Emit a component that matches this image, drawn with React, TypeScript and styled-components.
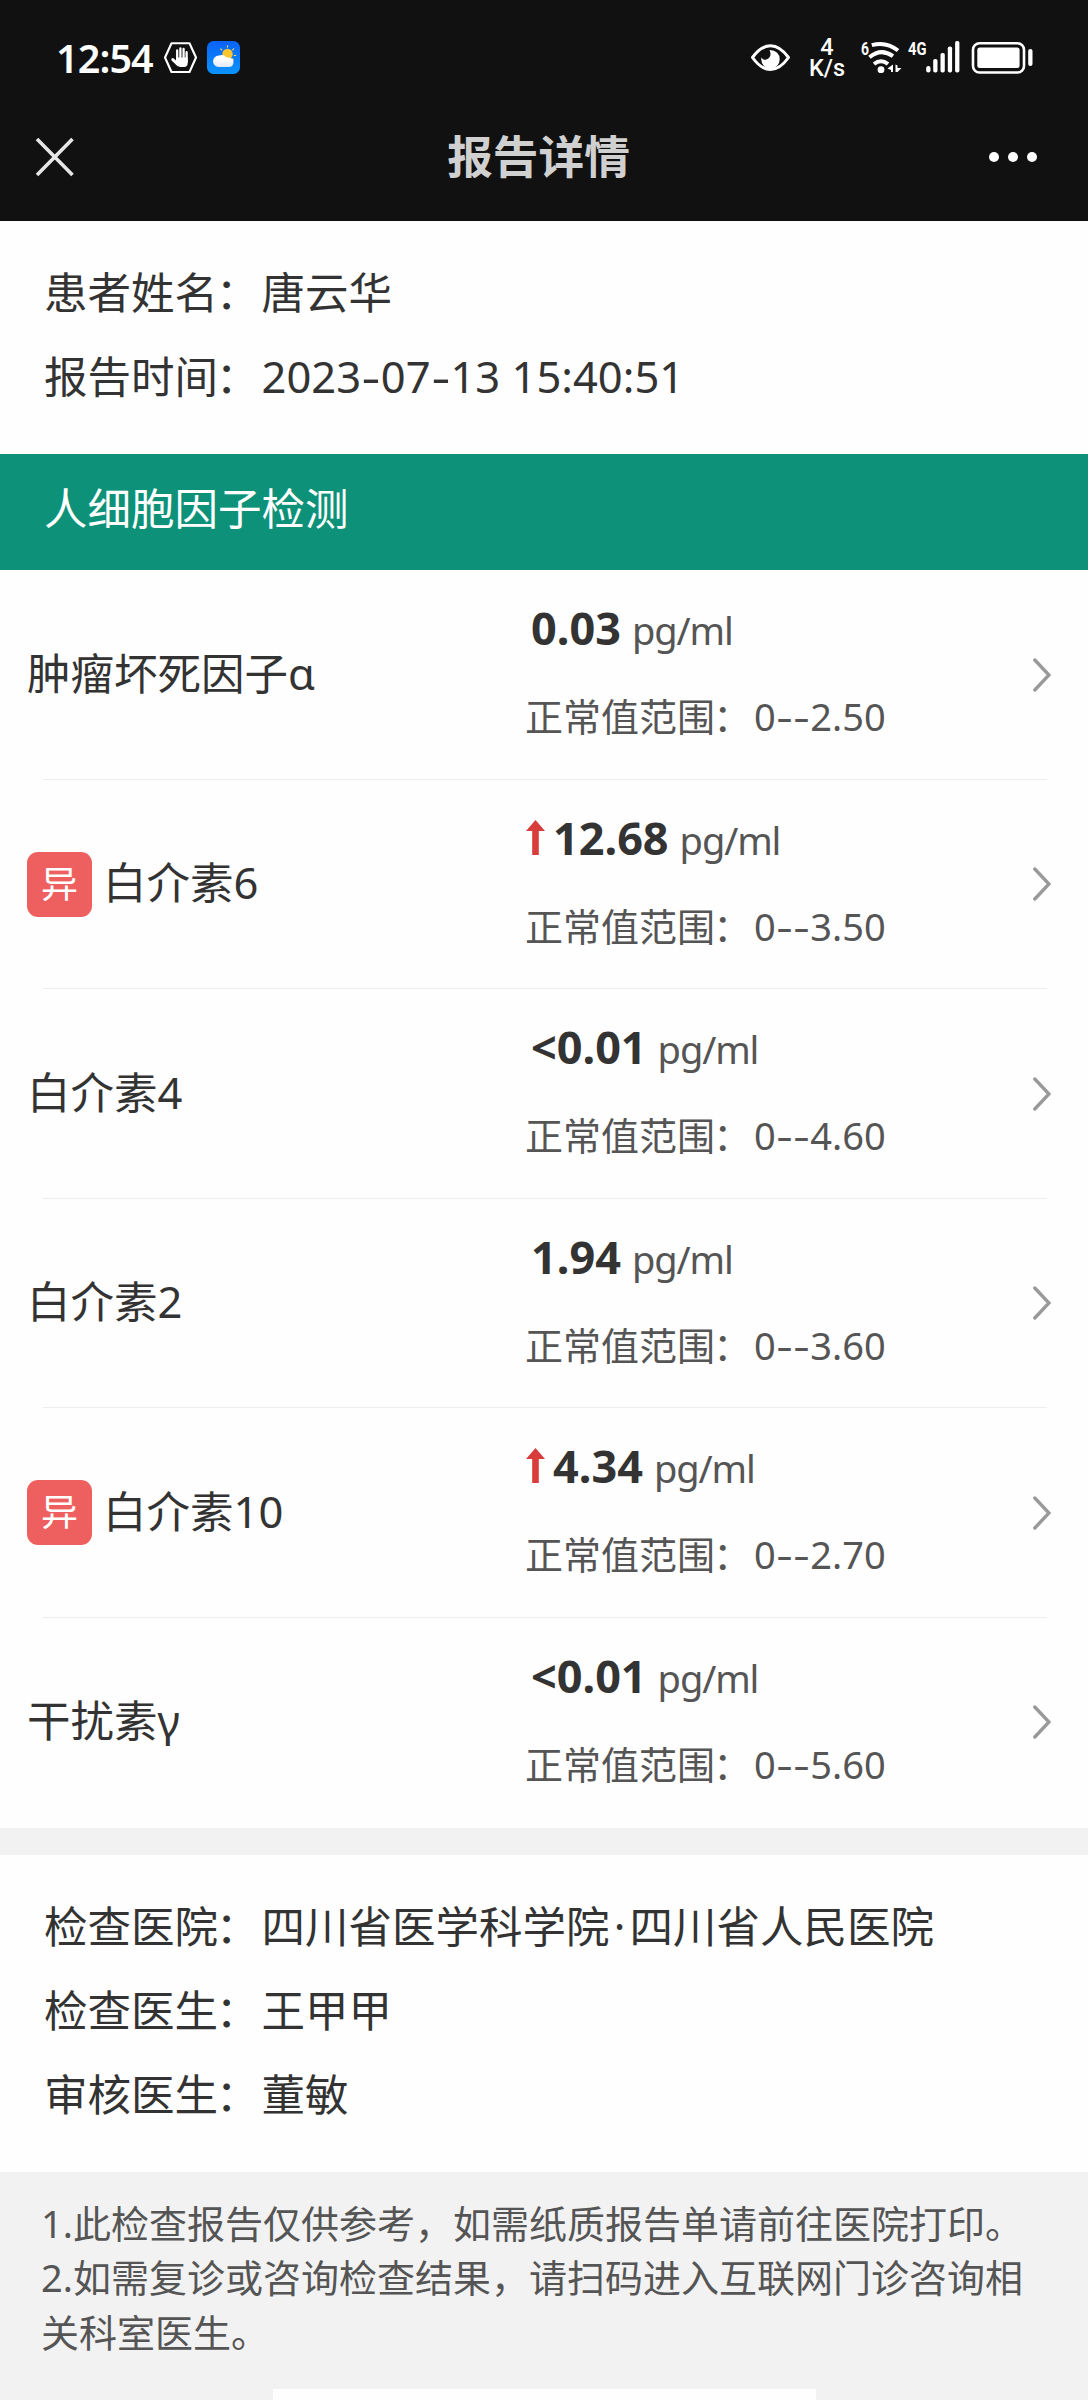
import React from "react";
import styled, { createGlobalStyle } from "styled-components";

const Global = createGlobalStyle`
  * { box-sizing: border-box; }
  body {
    margin: 0;
    background: #fefefe;
    font-family: "Noto Sans", "Noto Sans CJK SC", sans-serif;
    color: #333;
  }
`;

const Page = styled.div`
  width: 1088px;
  height: 2400px;
  overflow: hidden;
  display: flex;
  flex-direction: column;
  background: #fefefe;
`;

const Header = styled.header`
  height: 221px;
  flex: none;
  background: #111;
  color: #fff;
`;

const StatusBar = styled.div`
  height: 92px;
  padding: 24px 55px 0 56px;
  display: flex;
  align-items: center;
  justify-content: space-between;
`;

const StatusGroup = styled.div`
  display: flex;
  align-items: center;
`;

const Clock = styled.span`
  width: 108px;
  font: 600 39.5px/60px "Noto Sans", sans-serif;
  letter-spacing: -0.9px;
  white-space: nowrap;
`;

const StatusIcon = styled.svg<{ $gap?: number }>`
  display: block;
  flex: none;
  overflow: visible;
  margin-left: ${(p) => p.$gap ?? 0}px;
`;

const SmallMark = styled.text`
  font: 700 19px Roboto, sans-serif;
  fill: #fff;
`;

const Speed = styled.div`
  width: 36px;
  margin-left: 19px;
  display: flex;
  flex-direction: column;
  align-items: center;
  font: 500 23.5px/21px Roboto, sans-serif;
`;

const NavBar = styled.div`
  height: 129px;
  padding: 0 50px 0 35px;
  display: grid;
  grid-template-columns: 1fr auto 1fr;
  align-items: center;
`;

const Title = styled.h1`
  margin: 0 -2px 6px 2px;
  font: 700 45.7px/60px "Noto Sans CJK SC", sans-serif;
  color: #d0d0d0;
`;

const MoreIcon = styled.svg`
  justify-self: end;
`;

const InfoSection = styled.section`
  flex: none;
  padding: 29px 44px 36px;
`;

const InfoLine = styled.div`
  display: flex;
  height: 84px;
  line-height: 84px;
  font-size: 43.5px;
  white-space: nowrap;
`;

const InfoLabel = styled.span`
  width: 217.5px;
`;

const InfoValue = styled.span`
  white-space: nowrap;
`;

const Colon = styled.span`
  margin-left: -0.05em;
`;

const MiddleDot = styled.span`
  display: inline-block;
  width: 20px;
  text-align: center;
`;

const Dash = styled.span`
  display: inline-block;
  width: 0.455em;
  text-align: center;
  transform: scaleX(1.35);
`;

const Banner = styled.h2`
  flex: none;
  margin: 0;
  height: 116px;
  padding: 0 44px;
  line-height: 109px;
  font-size: 43.5px;
  font-weight: 400;
  color: #fff;
  background: #0d9279;
`;

const ResultList = styled.ul`
  flex: none;
  list-style: none;
  margin: 0;
  padding: 0;
  height: 1258px;
  display: grid;
  grid-template-rows: repeat(6, 209.5px);
`;

const ResultRow = styled.li`
  display: grid;
  grid-template-columns: 498px 1fr 18px;
  align-items: center;
  padding: 0 37px 0 27px;
  background: linear-gradient(#ededed, #ededed) 43px 100% / 1004px 1px no-repeat;
  &:last-child { background: none; }
`;

const Name = styled.div`
  display: flex;
  align-items: center;
  font-size: 43.5px;
  line-height: 65px;
`;

const NameText = styled.span`
  margin-top: -3px;
`;

const Badge = styled.span`
  width: 65px;
  height: 65px;
  margin-right: 11px;
  border-radius: 11px;
  background: #ee5f5f;
  color: #fff;
  font-size: 37px;
  line-height: 64px;
  text-align: center;
`;

const Measure = styled.div`
  display: flex;
  flex-direction: column;
  padding-bottom: 2px;
  color: #555;
  font-size: 38px;
`;

const ValueLine = styled.div`
  display: flex;
  align-items: baseline;
  height: 85px;
  line-height: 54px;
`;

const ArrowIcon = styled.svg`
  margin: 0 8px 0 1px;
`;

const Value = styled.strong<{ $flagged: boolean }>`
  margin-left: ${(p) => (p.$flagged ? 0 : 6)}px;
  margin-right: 11px;
  color: #333;
  font-size: 45px;
  font-weight: 700;
`;

const Unit = styled.span`
  letter-spacing: -1.1px;
`;

const RangeLine = styled.div`
  display: flex;
  height: 60px;
  line-height: 60px;
  white-space: nowrap;
`;

const RangeLabel = styled.span`
  width: 229px;
`;

const Divider = styled.div`
  flex: none;
  height: 27px;
  background: #f2f2f2;
`;

const Notes = styled.footer`
  flex: 1;
  display: flex;
  flex-direction: column;
  align-items: center;
  justify-content: space-between;
  padding-top: 24px;
  background: #f2f2f2;
`;

const NoteText = styled.p`
  margin: 0;
  width: 100%;
  padding: 0 41px;
  font-size: 38px;
  line-height: 54.3px;
  color: #555;
  white-space: nowrap;
`;

const QrPanel = styled.div`
  width: 543px;
  height: 11px;
  background: #fefefe;
`;

type Result = { name: string; value: string; range: string; high?: boolean };

const results: Result[] = [
  { name: "肿瘤坏死因子α", value: "0.03", range: "0--2.50" },
  { name: "白介素6", value: "12.68", range: "0--3.50", high: true },
  { name: "白介素4", value: "<0.01", range: "0--4.60" },
  { name: "白介素2", value: "1.94", range: "0--3.60" },
  { name: "白介素10", value: "4.34", range: "0--2.70", high: true },
  { name: "干扰素γ", value: "<0.01", range: "0--5.60" },
];

/** Renders a string with its hyphens set as wide dashes. */
function Dashed({ text }: { text: string }) {
  return (
    <span>
      {text.split("").map((c, i) => (c === "-" ? <Dash key={i}>-</Dash> : c))}
    </span>
  );
}

const HandIcon = () => (
  <StatusIcon width="33" height="34" viewBox="164 41 33 34">
    <path d="M171.500 43.200H189.500L196 57.500L189.500 72H171.500L165 57.500Z" fill="none" stroke="#fff" strokeWidth="2.1" strokeLinejoin="round" />
    <g stroke="#fff" strokeWidth="2.3" strokeLinecap="round" fill="none">
      <path d="M177.200 60V50.500M180.400 60V48.400M183.600 60V49M186.600 62V52.200" />
      <path d="M172.800 59.600L177.500 64" strokeWidth="3" />
    </g>
    <path d="M176.200 57.500H187.700V63Q187.700 67 184 67H180Q177.500 67 175.500 64Z" fill="#fff" />
  </StatusIcon>
);

const WeatherIcon = () => (
  <StatusIcon $gap={10} width="33" height="34" viewBox="207 41 33 34">
    <defs>
      <linearGradient id="sky" x1="0" y1="0" x2="0" y2="1">
        <stop offset="0" stopColor="#0a62f5" />
        <stop offset="1" stopColor="#0a94ff" />
      </linearGradient>
      <linearGradient id="cloud" x1="0" y1="0" x2="0" y2="1">
        <stop offset="0.3" stopColor="#fff" />
        <stop offset="1" stopColor="#dfe9f5" />
      </linearGradient>
    </defs>
    <rect x="207" y="41" width="33" height="33" rx="6.500" fill="url(#sky)" />
    <circle cx="227.500" cy="54" r="5.200" fill="#ffc62e" />
    <path d="M227.500 47V45.800M221.800 49.800L220.800 48.800M232.700 49.800L233.700 48.800M234.300 55.500H235.700M232.500 59L233.300 59.800" stroke="#ffd65a" strokeWidth="1.200" strokeLinecap="round" />
    <path d="M218.500 67A5.700 5.700 0 0 1 213 61.300A6.500 6.500 0 0 1 219 55.500A6.800 6.800 0 0 1 226.500 57.500Q233.500 57 233.500 62Q233.500 67 228.500 67Z" fill="url(#cloud)" />
  </StatusIcon>
);

const EyeIcon = () => (
  <StatusIcon width="39" height="34" viewBox="752 41 39 34">
    <path d="M753.500 57.500Q762 45.700 771.500 45.700T789.500 57.500Q781 69.500 771.500 69.500T753.500 57.500Z" fill="none" stroke="#fff" strokeWidth="3" strokeLinejoin="round" />
    <path d="M770.500 50Q780.700 50.500 780.700 59.500A9.200 9.200 0 0 1 762.300 59.500V57.500Q764 60.300 767.500 59.500Q771.800 58 771.500 53.500Q771.300 51.500 770.500 50Z" fill="#fff" />
  </StatusIcon>
);

const WifiIcon = () => (
  <StatusIcon $gap={15} width="42" height="34" viewBox="860 41 42 34">
    <SmallMark x="861" y="54.5" textLength="8" lengthAdjust="spacingAndGlyphs">6</SmallMark>
    <g fill="none" stroke="#fff" strokeWidth="4">
      <path d="M871.800 45.200Q886 41 898 50.500" />
      <path d="M869.500 57.200Q881 47.500 893 56.200" />
      <path d="M874 64Q881 58.500 888 64" />
    </g>
    <circle cx="881" cy="69.700" r="3.400" fill="#fff" />
    <path d="M893 64.500V72H891V70L887.500 68.500ZM895.500 64.500V72L897.500 72L901.500 68H897.500V65.500Z" fill="#fff" />
  </StatusIcon>
);

const SignalIcon = () => (
  <StatusIcon $gap={6} width="52" height="34" viewBox="908 41 52 34">
    <SmallMark x="908" y="55.200" textLength="18.500" lengthAdjust="spacingAndGlyphs">4G</SmallMark>
    <g fill="#fff">
      <rect x="926.200" y="66" width="4.300" height="6.500" rx="2.100" />
      <rect x="933.200" y="59" width="4.300" height="13.500" rx="1.800" />
      <rect x="940.500" y="53" width="4.300" height="19.500" rx="1.800" />
      <rect x="947.800" y="46.500" width="4.300" height="26" rx="1.800" />
      <rect x="955.100" y="41" width="4.300" height="31.500" rx="1.800" />
    </g>
  </StatusIcon>
);

const BatteryIcon = () => (
  <StatusIcon $gap={11} width="62" height="34" viewBox="971 41 62 34">
    <rect x="973" y="43.200" width="51" height="29.300" rx="6.500" fill="none" stroke="#fff" strokeWidth="2.600" />
    <rect x="977.300" y="47.500" width="42.300" height="20.600" rx="2.500" fill="#fff" />
    <rect x="1028.200" y="49" width="4.300" height="17" rx="2" fill="#fff" />
  </StatusIcon>
);

export default function App() {
  return (
    <Page>
      <Global />
      <Header>
        <StatusBar>
          <StatusGroup>
            <Clock>12:54</Clock>
            <HandIcon />
            <WeatherIcon />
          </StatusGroup>
          <StatusGroup>
            <EyeIcon />
            <Speed><span>4</span><span>K/s</span></Speed>
            <WifiIcon />
            <SignalIcon />
            <BatteryIcon />
          </StatusGroup>
        </StatusBar>
        <NavBar>
          <svg width="40" height="40" viewBox="0 0 40 40" fill="none" stroke="#e6e6e6" strokeWidth="3.6">
            <path d="M2 2L37.500 38M37.500 2L2 38" />
          </svg>
          <Title>报告详情</Title>
          <MoreIcon width="50" height="12" viewBox="0 0 50 12" fill="#fff">
            <circle cx="6" cy="6" r="5" /><circle cx="25" cy="6" r="5" /><circle cx="44" cy="6" r="5" />
          </MoreIcon>
        </NavBar>
      </Header>

      <InfoSection>
        <InfoLine><InfoLabel>患者姓名<Colon>：</Colon></InfoLabel><InfoValue>唐云华</InfoValue></InfoLine>
        <InfoLine><InfoLabel>报告时间<Colon>：</Colon></InfoLabel><InfoValue><Dashed text="2023-07-13 15:40:51" /></InfoValue></InfoLine>
      </InfoSection>

      <Banner>人细胞因子检测</Banner>

      <ResultList>
        {results.map((r) => (
          <ResultRow key={r.name}>
            <Name>
              {r.high && <Badge>异</Badge>}
              <NameText>{r.name}</NameText>
            </Name>
            <Measure>
              <ValueLine>
                {r.high && (
                  <ArrowIcon width="19" height="35" viewBox="0 0 19 35" fill="#d83c3b">
                    <path d="M9.500 0L19 11H12.800V35H6.200V11H0Z" />
                  </ArrowIcon>
                )}
                <Value $flagged={!!r.high}>{r.value}</Value>
                <Unit>pg/ml</Unit>
              </ValueLine>
              <RangeLine>
                <RangeLabel>正常值范围<Colon>：</Colon></RangeLabel>
                <Dashed text={r.range} />
              </RangeLine>
            </Measure>
            <svg width="18" height="36" viewBox="0 0 18 36" fill="none" stroke="#999" strokeWidth="3.4" strokeLinecap="round">
              <path d="M1.800 3L16 18L1.800 33" />
            </svg>
          </ResultRow>
        ))}
      </ResultList>

      <Divider />

      <InfoSection>
        <InfoLine>
          <InfoLabel>检查医院<Colon>：</Colon></InfoLabel>
          <InfoValue>四川省医学科学院<MiddleDot>·</MiddleDot>四川省人民医院</InfoValue>
        </InfoLine>
        <InfoLine><InfoLabel>检查医生<Colon>：</Colon></InfoLabel><InfoValue>王甲甲</InfoValue></InfoLine>
        <InfoLine><InfoLabel>审核医生<Colon>：</Colon></InfoLabel><InfoValue>董敏</InfoValue></InfoLine>
      </InfoSection>

      <Notes>
        <NoteText>
          1.此检查报告仅供参考，如需纸质报告单请前往医院打印。<br />
          2.如需复诊或咨询检查结果，请扫码进入互联网门诊咨询相<br />
          关科室医生。
        </NoteText>
        <QrPanel />
      </Notes>
    </Page>
  );
}
